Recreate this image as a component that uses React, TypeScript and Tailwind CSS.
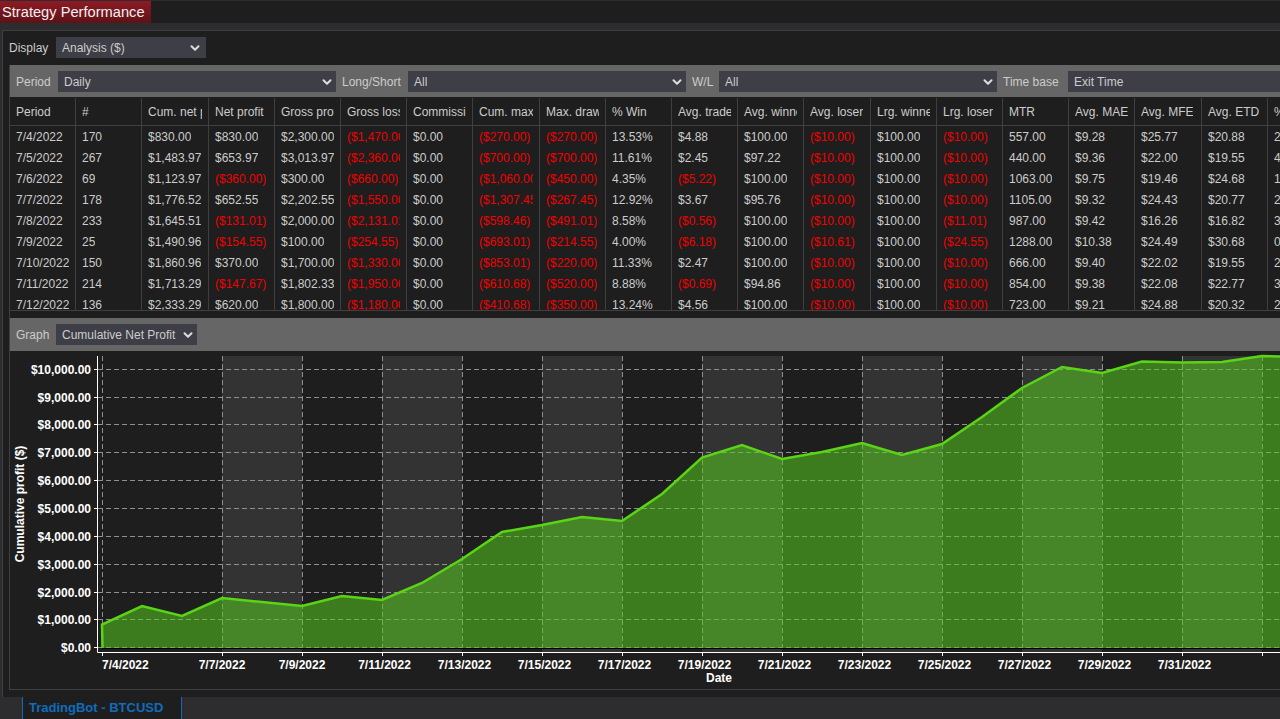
import React from 'react';
import { ChevronDown } from 'lucide-react';

const COLS = 'grid grid-cols-[66px_66px_67px_66px_66px_66px_66px_67px_66px_66px_66px_66px_67px_66px_66px_66px_66px_67px_66px_20px]';

const HEADERS = ['Period', '#', 'Cum. net profit', 'Net profit', 'Gross profit', 'Gross loss', 'Commission', 'Cum. max drawdown', 'Max. drawdown', '% Win', 'Avg. trade', 'Avg. winner', 'Avg. loser', 'Lrg. winner', 'Lrg. loser', 'MTR', 'Avg. MAE', 'Avg. MFE', 'Avg. ETD', '%'];

const ROWS = [
  ['7/4/2022', '170', '$830.00', '$830.00', '$2,300.00', '($1,470.00)', '$0.00', '($270.00)', '($270.00)', '13.53%', '$4.88', '$100.00', '($10.00)', '$100.00', '($10.00)', '557.00', '$9.28', '$25.77', '$20.88', '2'],
  ['7/5/2022', '267', '$1,483.97', '$653.97', '$3,013.97', '($2,360.00)', '$0.00', '($700.00)', '($700.00)', '11.61%', '$2.45', '$97.22', '($10.00)', '$100.00', '($10.00)', '440.00', '$9.36', '$22.00', '$19.55', '4'],
  ['7/6/2022', '69', '$1,123.97', '($360.00)', '$300.00', '($660.00)', '$0.00', '($1,060.00)', '($450.00)', '4.35%', '($5.22)', '$100.00', '($10.00)', '$100.00', '($10.00)', '1063.00', '$9.75', '$19.46', '$24.68', '1'],
  ['7/7/2022', '178', '$1,776.52', '$652.55', '$2,202.55', '($1,550.00)', '$0.00', '($1,307.45)', '($267.45)', '12.92%', '$3.67', '$95.76', '($10.00)', '$100.00', '($10.00)', '1105.00', '$9.32', '$24.43', '$20.77', '2'],
  ['7/8/2022', '233', '$1,645.51', '($131.01)', '$2,000.00', '($2,131.01)', '$0.00', '($598.46)', '($491.01)', '8.58%', '($0.56)', '$100.00', '($10.00)', '$100.00', '($11.01)', '987.00', '$9.42', '$16.26', '$16.82', '3'],
  ['7/9/2022', '25', '$1,490.96', '($154.55)', '$100.00', '($254.55)', '$0.00', '($693.01)', '($214.55)', '4.00%', '($6.18)', '$100.00', '($10.61)', '$100.00', '($24.55)', '1288.00', '$10.38', '$24.49', '$30.68', '0'],
  ['7/10/2022', '150', '$1,860.96', '$370.00', '$1,700.00', '($1,330.00)', '$0.00', '($853.01)', '($220.00)', '11.33%', '$2.47', '$100.00', '($10.00)', '$100.00', '($10.00)', '666.00', '$9.40', '$22.02', '$19.55', '2'],
  ['7/11/2022', '214', '$1,713.29', '($147.67)', '$1,802.33', '($1,950.00)', '$0.00', '($610.68)', '($520.00)', '8.88%', '($0.69)', '$94.86', '($10.00)', '$100.00', '($10.00)', '854.00', '$9.38', '$22.08', '$22.77', '3'],
  ['7/12/2022', '136', '$2,333.29', '$620.00', '$1,800.00', '($1,180.00)', '$0.00', '($410.68)', '($350.00)', '13.24%', '$4.56', '$100.00', '($10.00)', '$100.00', '($10.00)', '723.00', '$9.21', '$24.88', '$20.32', '2'],
];

const Select = ({ value, className }: { value: string; className: string }) => (
  <div className={`flex h-[21px] shrink-0 items-center justify-between bg-[#3e3e46] pl-[6px] text-[#cccccc] ${className}`}>
    <span>{value}</span>
    <ChevronDown size={14} strokeWidth={3.5} className="text-[#dcdcdc]" />
  </div>
);

// chart data in page coordinates, one point per day, 40px apart
const POINTS: [number, number][] = [
  [102, 624.5], [142, 606], [182, 616], [222, 598], [262, 602], [302, 606], [342, 596], [382, 600],
  [422, 583], [462, 559], [502, 532], [542, 525], [582, 517], [622, 521], [662, 494], [702, 457.5],
  [742, 445], [782, 459], [822, 452], [862, 443], [902, 455], [942, 444], [982, 417], [1022, 388],
  [1062, 367], [1102, 373], [1142, 361.5], [1182, 362.5], [1222, 362], [1262, 356], [1280, 356.5],
];
const BANDS = [222, 382, 542, 702, 862, 1022, 1182];
const Y_TICKS = ['$10,000.00', '$9,000.00', '$8,000.00', '$7,000.00', '$6,000.00', '$5,000.00', '$4,000.00', '$3,000.00', '$2,000.00', '$1,000.00', '$0.00'];
const X_TICKS: [number, string][] = [
  [102, '7/4/2022'], [222, '7/7/2022'], [302, '7/9/2022'], [382, '7/11/2022'], [462, '7/13/2022'],
  [542, '7/15/2022'], [622, '7/17/2022'], [702, '7/19/2022'], [782, '7/21/2022'], [862, '7/23/2022'],
  [942, '7/25/2022'], [1022, '7/27/2022'], [1102, '7/29/2022'], [1182, '7/31/2022'], [1262, ''],
];
const tickY = (i: number) => Math.floor(369.3 + i * 27.84) + 0.5;

const Chart = () => {
  const line = POINTS.map((p) => p.join(',')).join(' ');
  return (
    <svg width={1270} height={338} viewBox="10 351 1270 338" className="block" fontFamily="'Liberation Sans', Arial, sans-serif" fontSize={12} fontWeight={700} fill="#ffffff">
      {BANDS.map((x) => (
        <rect key={x} x={x} y={356} width={80} height={296} fill="#333333" />
      ))}
      {Y_TICKS.map((_, i) => (
        <line key={i} x1={98} x2={1280} y1={tickY(i)} y2={tickY(i)} stroke="#909090" strokeDasharray="5 3" />
      ))}
      {X_TICKS.map(([x]) => (
        <line key={x} x1={x + 0.5} x2={x + 0.5} y1={356} y2={652} stroke="#909090" strokeDasharray="5 3" />
      ))}
      <polygon points={`102,648 ${line} 1280,648`} fill="#56cb20" fillOpacity={0.55} />
      <line x1={102} x2={1280} y1={648.5} y2={648.5} stroke="#000000" />
      <polyline points={`102.5,648 ${line}`} fill="none" stroke="#5ad516" strokeWidth={2.5} />
      <path d="M97.5 356V652.5H1280" fill="none" stroke="#ffffff" />
      {Y_TICKS.map((label, i) => (
        <g key={label}>
          <line x1={94} x2={98} y1={tickY(i)} y2={tickY(i)} stroke="#ffffff" />
          <text x={91} y={tickY(i) + 4} textAnchor="end">{label}</text>
        </g>
      ))}
      {X_TICKS.map(([x, label]) => (
        <g key={x}>
          <line x1={x + 0.5} x2={x + 0.5} y1={652} y2={656} stroke="#ffffff" />
          {label && (
            <text x={x === 102 ? 102 : label.length > 8 ? x + 2.5 : x} y={669} textAnchor={x === 102 ? 'start' : 'middle'}>{label}</text>
          )}
        </g>
      ))}
      <text x={719} y={682} textAnchor="middle">Date</text>
      <text transform="translate(24 504) rotate(-90)" textAnchor="middle">Cumulative profit ($)</text>
    </svg>
  );
};

const App = () => {
  return (
    <div className="flex h-[719px] w-[1280px] flex-col overflow-hidden bg-[#2d2d30] font-['Liberation_Sans',Arial,sans-serif] text-[12px] text-[#cccccc]">
      <div className="mt-px flex h-[22px] shrink-0 bg-[#1e1e1e]">
        <div className="flex w-[151px] items-center whitespace-nowrap bg-gradient-to-b from-[#8e1a24] to-[#5e1218] pl-[2px] text-[14.67px] text-[#f0f0f0]">
          Strategy Performance
        </div>
      </div>

      <div className="ml-[2px] mt-[7px] h-[667px] shrink-0 border-l border-t border-[#3f3f42] bg-[#1e1e1e] pl-[6px]">
        <div className="flex h-[34px] items-end pb-[7px]">
          <span className="w-[47px] shrink-0 self-center pt-[6px]">Display</span>
          <Select value="Analysis ($)" className="w-[150px] pr-[4px]" />
        </div>

        <div className="border-l border-[#3f3f42]">
          <div className="flex h-[32px] items-center bg-[#666666] pl-[6px] pt-px">
            <span className="w-[42px] shrink-0">Period</span>
            <Select value="Daily" className="w-[278px] pr-[2px]" />
            <span className="w-[72px] shrink-0 pl-[6px]">Long/Short</span>
            <Select value="All" className="w-[278px] pr-[2px]" />
            <span className="w-[33px] shrink-0 pl-[6px]">W/L</span>
            <Select value="All" className="w-[278px] pr-[2px]" />
            <span className="w-[71px] shrink-0 whitespace-nowrap pl-[6px]">Time base</span>
            <Select value="Exit Time" className="w-[280px] pr-[2px]" />
          </div>

          <div className={`mt-px h-[28px] items-center border-b border-[#3f3f42] ${COLS}`}>
            {HEADERS.map((h) => (
              <div key={h} className="flex h-full items-center border-r border-[#3f3f42] pl-[6px] pr-[6px] last:border-r-0">
                <div className="overflow-hidden whitespace-nowrap">{h}</div>
              </div>
            ))}
          </div>

          <div className="h-[185px] overflow-hidden border-b border-[#3f3f42]">
            {ROWS.map((row) => (
              <div key={row[0]} className={`h-[21px] ${COLS}`}>
                {row.map((v, i) => (
                  <div key={i} className={`flex h-full items-center border-r border-[#3f3f42] pl-[6px] pr-[6px] last:border-r-0 ${v.startsWith('(') ? 'text-[#f00000]' : ''}`}>
                    <div className="overflow-hidden whitespace-nowrap">{v}</div>
                  </div>
                ))}
              </div>
            ))}
          </div>

          <div className="mt-[7px] flex h-[33px] items-center bg-[#666666] pl-[6px]">
            <span className="w-[40px] shrink-0">Graph</span>
            <Select value="Cumulative Net Profit" className="w-[141px] pr-[2px]" />
          </div>

          <div className="h-[339px] border-b border-[#3f3f42]">
            <Chart />
          </div>
        </div>
      </div>

      <div className="flex flex-1 pl-[22px]">
        <div className="flex w-[160px] items-center border-x border-[#0f6cbd] bg-[#1e1e1e] pl-[6px] text-[13px] font-bold text-[#0f6cbd]">
          TradingBot - BTCUSD
        </div>
      </div>
    </div>
  );
};

export default App;
